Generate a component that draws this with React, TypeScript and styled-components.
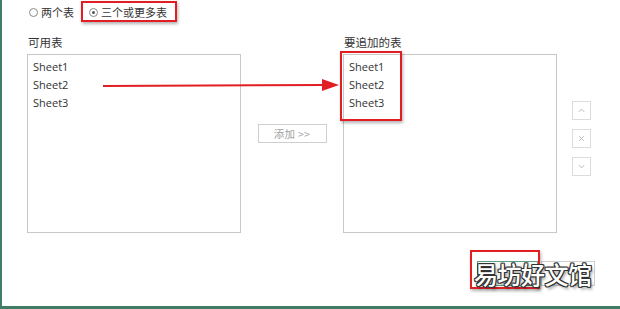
import React from "react";
import styled, { createGlobalStyle } from "styled-components";

const Global = createGlobalStyle`
  html, body { margin: 0; padding: 0; background: #ffffff; }
  body { font-family: "Noto Sans CJK SC", "Noto Sans", sans-serif; }
`;

const Frame = styled.div`
  position: relative;
  width: 620px;
  height: 309px;
  box-sizing: border-box;
  border-left: 2px solid #3f7d66;
  border-bottom: 3px solid #3f7d66;
  background: #fff;
  color: #333;
  font-size: 12px;
  overflow: hidden;
  display: flex;
  flex-direction: column;
`;

const RadioRow = styled.div`
  display: flex;
  align-items: center;
  gap: 15px;
  height: 24px;
  padding-left: 27px;
`;

const RadioItem = styled.label`
  display: flex;
  align-items: center;
  gap: 3px;
  font-size: 11px;
  color: #333;
  line-height: 14px;
`;

const Circle = styled.span<{ $on?: boolean }>`
  width: 7px;
  height: 7px;
  border-radius: 50%;
  border: 1px solid #8a8a8a;
  display: inline-flex;
  align-items: center;
  justify-content: center;
  &::after {
    content: "";
    width: 3px;
    height: 3px;
    border-radius: 50%;
    background: ${(p) => (p.$on ? "#555" : "transparent")};
  }
`;

const Main = styled.div`
  display: flex;
  padding-left: 25px;
  margin-top: 11px;
`;

const Column = styled.div`
  display: flex;
  flex-direction: column;
  width: 214px;
`;

const Label = styled.div`
  font-size: 11.5px;
  line-height: 14px;
  height: 19px;
  padding-left: 1px;
  color: #333;
`;

const ListBox = styled.div`
  box-sizing: border-box;
  height: 179px;
  border: 1px solid #c8c8c8;
  padding: 3px 5px;
`;

const ListItem = styled.div`
  font-family: "Open Sans", "Noto Sans", sans-serif;
  font-size: 11px;
  line-height: 18px;
  color: #333;
`;

const Middle = styled.div`
  width: 102px;
  display: flex;
  justify-content: center;
  padding-top: 89px;
`;

const AddButton = styled.div`
  box-sizing: border-box;
  width: 69px;
  height: 19px;
  border: 1px solid #cfcfcf;
  display: flex;
  align-items: center;
  justify-content: center;
  font-size: 10.5px;
  color: #a0a0a0;
  letter-spacing: 0.3px;
`;

const SideCol = styled.div`
  display: flex;
  flex-direction: column;
  gap: 9px;
  margin-left: 15px;
  padding-top: 66px;
`;

const SideButton = styled.div`
  box-sizing: border-box;
  width: 19px;
  height: 19px;
  border: 1px solid #dcdcdc;
  display: flex;
  align-items: center;
  justify-content: center;
`;

const Footer = styled.div`
  display: flex;
  gap: 3px;
  padding-left: 475px;
  margin-top: 28px;
`;

const DialogButton = styled.div<{ $primary?: boolean; $w: number }>`
  box-sizing: border-box;
  width: ${(p) => p.$w}px;
  height: 25px;
  border: 1px solid ${(p) => (p.$primary ? "#5f9e84" : "#cfcfcf")};
  background: ${(p) => (p.$primary ? "#f3f8f5" : "#fff")};
`;

const RedBox = styled.div<{ $x: number; $y: number; $w: number; $h: number }>`
  position: absolute;
  left: ${(p) => p.$x}px;
  top: ${(p) => p.$y}px;
  width: ${(p) => p.$w}px;
  height: ${(p) => p.$h}px;
  box-sizing: border-box;
  border: 2px solid #e01e24;
  box-shadow: 1px 2px 3px rgba(0, 0, 0, 0.3);
  pointer-events: none;
`;

const ArrowSvg = styled.svg`
  position: absolute;
  left: 0;
  top: 0;
  pointer-events: none;
`;

const Watermark = styled.div`
  position: absolute;
  left: 472px;
  top: 258px;
  font-family: "Noto Sans CJK SC", sans-serif;
  font-weight: 500;
  font-size: 24px;
  line-height: 32px;
  letter-spacing: -0.5px;
  color: #ffffff;
  text-shadow:
    1px 0 0 #333, -1px 0 0 #333, 0 1px 0 #333, 0 -1px 0 #333,
    1px 1px 0 #333, -1px -1px 0 #333, 1px -1px 0 #333, -1px 1px 0 #333,
    2px 3px 3px rgba(0, 0, 0, 0.35);
  white-space: nowrap;
`;

const Chev = ({ d }: { d: string }) => (
  <svg width="9" height="9" viewBox="0 0 10 10">
    <path d={d} fill="none" stroke="#b8b8b8" strokeWidth="1.1" />
  </svg>
);

const sheets = ["Sheet1", "Sheet2", "Sheet3"];

export default function App() {
  return (
    <>
      <Global />
      <Frame>
        <RadioRow>
          <RadioItem>
            <Circle />
            两个表
          </RadioItem>
          <RadioItem>
            <Circle $on />
            三个或更多表
          </RadioItem>
        </RadioRow>
        <Main>
          <Column>
            <Label>可用表</Label>
            <ListBox>
              {sheets.map((s) => (
                <ListItem key={s}>{s}</ListItem>
              ))}
            </ListBox>
          </Column>
          <Middle>
            <AddButton>添加 &gt;&gt;</AddButton>
          </Middle>
          <Column>
            <Label>要追加的表</Label>
            <ListBox>
              {sheets.map((s) => (
                <ListItem key={s}>{s}</ListItem>
              ))}
            </ListBox>
          </Column>
          <SideCol>
            <SideButton>
              <Chev d="M2 6.5 L5 3.5 L8 6.5" />
            </SideButton>
            <SideButton>
              <Chev d="M2.5 2.5 L7.5 7.5 M7.5 2.5 L2.5 7.5" />
            </SideButton>
            <SideButton>
              <Chev d="M2 3.5 L5 6.5 L8 3.5" />
            </SideButton>
          </SideCol>
        </Main>
        <Footer>
          <DialogButton $primary $w={61} />
          <DialogButton $w={54} />
        </Footer>

        <ArrowSvg width="620" height="309">
          <line x1="101" y1="86" x2="324" y2="85" stroke="#e01e24" strokeWidth="2" />
          <polygon points="320,79 337,85 320,91" fill="#e01e24" />
        </ArrowSvg>
        <RedBox $x={79} $y={1} $w={96} $h={21} />
        <RedBox $x={338} $y={51} $w={62} $h={70} />
        <RedBox $x={468} $y={250} $w={70} $h={39} />
        <Watermark>易坊好文馆</Watermark>
      </Frame>
    </>
  );
}
